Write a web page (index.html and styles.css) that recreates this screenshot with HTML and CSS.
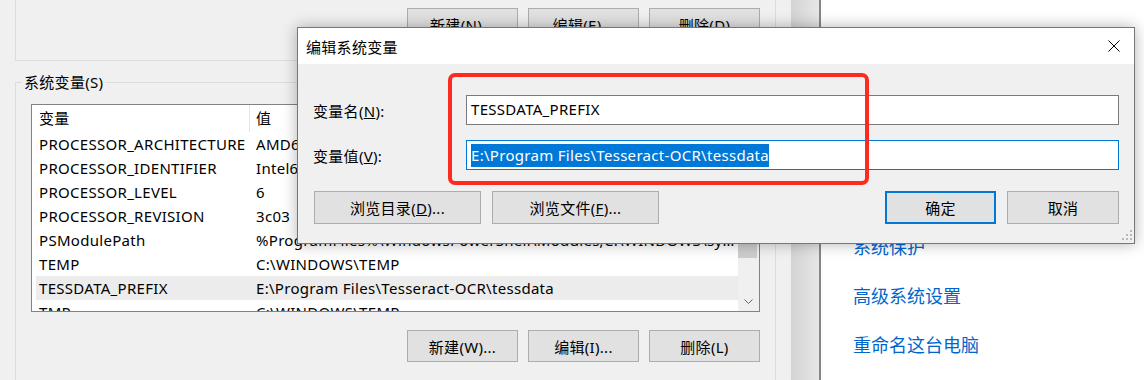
FILE: index.html
```html
<!DOCTYPE html>
<html lang="zh-CN">
<head>
    <meta charset="UTF-8">
    <meta name="viewport" content="width=device-width, initial-scale=1.0">
    <title>编辑系统变量</title>
    <link rel="stylesheet" href="styles.css">
</head>
<body>
    <div class="desktop">
        <!-- Environment variables window (behind the dialog) -->
        <div class="env-window">
            <div class="user-group">
                <div class="btn-row">
                    <button class="btn">新建(N)...</button>
                    <button class="btn">编辑(E)...</button>
                    <button class="btn">删除(D)</button>
                </div>
            </div>

            <fieldset class="sys-group">
                <legend>系统变量(S)</legend>
                <div class="var-list">
                    <div class="var-table">
                        <div class="var-head">
                            <span class="head-name">变量</span>
                            <span class="head-value">值</span>
                        </div>
                        <div class="var-row"><span class="cell-name">PROCESSOR_ARCHITECTURE</span><span class="cell-value">AMD64</span></div>
                        <div class="var-row"><span class="cell-name">PROCESSOR_IDENTIFIER</span><span class="cell-value">Intel64 Family 6 Model 60 Stepping 3, GenuineIntel</span></div>
                        <div class="var-row"><span class="cell-name">PROCESSOR_LEVEL</span><span class="cell-value">6</span></div>
                        <div class="var-row"><span class="cell-name">PROCESSOR_REVISION</span><span class="cell-value">3c03</span></div>
                        <div class="var-row"><span class="cell-name">PSModulePath</span><span class="cell-value">%ProgramFiles%\WindowsPowerShell\Modules;C:\WINDOWS\system32\WindowsPowerShell\v1.0\Modules</span></div>
                        <div class="var-row"><span class="cell-name">TEMP</span><span class="cell-value">C:\WINDOWS\TEMP</span></div>
                        <div class="var-row selected"><span class="cell-name">TESSDATA_PREFIX</span><span class="cell-value">E:\Program Files\Tesseract-OCR\tessdata</span></div>
                        <div class="var-row"><span class="cell-name">TMP</span><span class="cell-value">C:\WINDOWS\TEMP</span></div>
                    </div>
                    <div class="scrollbar">
                        <div class="thumb"></div>
                        <div class="scroll-arrow">
                            <svg width="9" height="5" viewBox="0 0 9 5"><polyline points="0.5,0.5 4.5,4.5 8.5,0.5" fill="none" stroke="#606060" stroke-width="1"/></svg>
                        </div>
                    </div>
                </div>
                <div class="btn-row">
                    <button class="btn">新建(W)...</button>
                    <button class="btn">编辑(I)...</button>
                    <button class="btn">删除(L)</button>
                </div>
            </fieldset>
        </div>

        <div class="window-edge"></div>

        <!-- System control panel (right side) -->
        <div class="system-panel">
            <a class="panel-link">设备管理器</a>
            <a class="panel-link">远程设置</a>
            <a class="panel-link">系统保护</a>
            <a class="panel-link">高级系统设置</a>
            <a class="panel-link">重命名这台电脑</a>
        </div>
    </div>

    <!-- Edit system variable dialog -->
    <div class="dialog">
        <div class="dialog-title">
            <span>编辑系统变量</span>
            <svg class="close-icon" width="12" height="12" viewBox="0 0 12 12">
                <line x1="0.5" y1="0.5" x2="11.5" y2="11.5" stroke="#000" stroke-width="1"/>
                <line x1="11.5" y1="0.5" x2="0.5" y2="11.5" stroke="#000" stroke-width="1"/>
            </svg>
        </div>
        <div class="dialog-body">
            <div class="form">
                <label class="form-label">变量名(<u>N</u>):</label>
                <div class="field">TESSDATA_PREFIX</div>
                <label class="form-label">变量值(<u>V</u>):</label>
                <div class="field focused"><span class="selection">E:\Program Files\Tesseract-OCR\tessdata</span></div>
            </div>
            <div class="dialog-actions">
                <button class="btn btn-wide">浏览目录(<u>D</u>)...</button>
                <button class="btn btn-wide">浏览文件(<u>F</u>)...</button>
                <button class="btn btn-default">确定</button>
                <button class="btn btn-cancel">取消</button>
            </div>
        </div>
        <svg class="grip" width="12" height="12" viewBox="0 0 12 12">
            <rect x="9" y="0" width="2" height="2" fill="#b8b8b8"/>
            <rect x="5" y="4" width="2" height="2" fill="#b8b8b8"/>
            <rect x="9" y="4" width="2" height="2" fill="#b8b8b8"/>
            <rect x="1" y="8" width="2" height="2" fill="#b8b8b8"/>
            <rect x="5" y="8" width="2" height="2" fill="#b8b8b8"/>
            <rect x="9" y="8" width="2" height="2" fill="#b8b8b8"/>
        </svg>
    </div>

    <!-- Red highlight drawn over the screenshot -->
    <div class="annotation"></div>
</body>
</html>
```

FILE: styles.css
```css
/* Windows 10 environment variable dialog */
body {
    margin: 0;
    width: 1144px;
    height: 380px;
    overflow: hidden;
    position: relative;
    font-family: "Noto Sans", "Noto Sans CJK SC", sans-serif;
    font-size: 15px;
    letter-spacing: 0.3px;
    color: #000;
    background-color: #fff;
}

.desktop {
    display: flex;
    height: 380px;
    overflow: hidden;
}

.env-window {
    width: 791px;
    flex: none;
    background-color: #f0f0f0;
}

.user-group {
    width: 761px;
    height: 61px;
    margin-left: 15px;
    padding: 8px 15px 0 0;
    box-sizing: border-box;
    border: 1px solid #dcdcdc;
    border-top: none;
}

.btn-row {
    display: flex;
    justify-content: flex-end;
    gap: 10px;
}

.btn {
    width: 111px;
    height: 32px;
    padding: 0;
    box-sizing: border-box;
    border: 1px solid #adadad;
    background-color: #e1e1e1;
    font: inherit;
    letter-spacing: inherit;
    color: #000;
    white-space: nowrap;
}

.sys-group {
    width: 761px;
    min-width: 0;
    height: 330px;
    margin: 11px 0 0 15px;
    padding: 12px 15px 0;
    box-sizing: border-box;
    border: 1px solid #dcdcdc;
}

.sys-group legend {
    margin-left: -9px;
    padding: 0 2px;
    line-height: 20px;
}

.var-list {
    height: 208px;
    box-sizing: border-box;
    border: 1px solid #828282;
    background-color: #fff;
    display: flex;
}

.var-table {
    flex: 1;
    min-width: 0;
    overflow: hidden;
}

.var-head {
    height: 27px;
    line-height: 27px;
    margin-left: 4px;
    display: flex;
}

.head-name {
    width: 214px;
    flex: none;
    box-sizing: border-box;
    padding-left: 3px;
    border-right: 1px solid #e5e5e5;
}

.head-value {
    padding-left: 6px;
}

.var-row {
    height: 24px;
    line-height: 24px;
    margin-left: 4px;
    display: flex;
    white-space: nowrap;
}

.var-row.selected {
    background-color: #ececec;
}

.cell-name {
    width: 217px;
    flex: none;
    box-sizing: border-box;
    padding-left: 3px;
    overflow: hidden;
}

.cell-value {
    flex: 1;
    min-width: 0;
    padding-left: 3px;
    overflow: hidden;
    text-overflow: ellipsis;
}

.scrollbar {
    width: 21px;
    flex: none;
    background-color: #f0f0f0;
    display: flex;
    flex-direction: column;
}

.thumb {
    height: 63px;
    margin: 90px 2px 0 0;
    background-color: #cdcdcd;
}

.scroll-arrow {
    height: 20px;
    margin-top: auto;
    display: flex;
    align-items: center;
    justify-content: center;
}

.sys-group .btn-row {
    margin-top: 18px;
}

.window-edge {
    width: 28px;
    flex: none;
    background: linear-gradient(to right, #d3d3d3, #e7e7e7);
    border-right: 2px solid #868686;
}

.system-panel {
    flex: 1;
    padding: 137px 0 0 32px;
    display: flex;
    flex-direction: column;
    gap: 25px;
}

.panel-link {
    font-size: 18px;
    line-height: 24px;
    letter-spacing: 0;
    color: #0066cc;
}

/* Dialog */
.dialog {
    position: absolute;
    left: 297px;
    top: 27px;
    width: 838px;
    height: 217px;
    box-sizing: border-box;
    border: 1px solid #777;
    background-color: #f0f0f0;
    box-shadow: 0 0 14px rgba(0, 0, 0, 0.3);
    display: flex;
    flex-direction: column;
}

.dialog-title {
    height: 36px;
    flex: none;
    padding: 0 14px 0 8px;
    background-color: #fff;
    display: flex;
    align-items: center;
    justify-content: space-between;
}

.dialog-body {
    flex: 1;
    padding: 31px 15px 0;
}

.form {
    display: grid;
    grid-template-columns: 153px 1fr;
    row-gap: 15px;
    align-items: center;
}

.field {
    height: 30px;
    box-sizing: border-box;
    padding: 0 4px 2px;
    border: 1px solid #7a7a7a;
    background-color: #fff;
    display: flex;
    align-items: center;
    white-space: nowrap;
}

.field.focused {
    border-color: #0078d7;
    padding-bottom: 0;
}

.selection {
    line-height: 23px;
    background-color: #0078d7;
    color: #fff;
}

.dialog-actions {
    margin-top: 21px;
    display: flex;
    gap: 11px;
}

.btn-wide {
    width: 167px;
    height: 33px;
    margin-left: 1px;
}

.btn-wide + .btn-wide {
    margin-left: 0;
}

.btn-default {
    height: 33px;
    margin-left: auto;
    border: 2px solid #0078d7;
}

.btn-cancel {
    width: 112px;
    height: 33px;
}

.grip {
    position: absolute;
    right: 1px;
    bottom: 1px;
}

.annotation {
    position: absolute;
    left: 448px;
    top: 73px;
    width: 421px;
    height: 112px;
    box-sizing: border-box;
    border: 4px solid #ff2a1f;
    border-radius: 7px;
}
```
